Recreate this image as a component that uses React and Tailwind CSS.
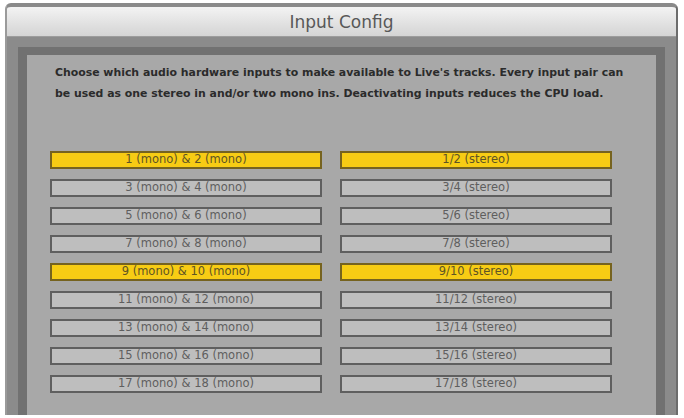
import React from 'react';

const rows = [
  { mono: '1 (mono) & 2 (mono)', stereo: '1/2 (stereo)', on: true },
  { mono: '3 (mono) & 4 (mono)', stereo: '3/4 (stereo)' },
  { mono: '5 (mono) & 6 (mono)', stereo: '5/6 (stereo)' },
  { mono: '7 (mono) & 8 (mono)', stereo: '7/8 (stereo)' },
  { mono: '9 (mono) & 10 (mono)', stereo: '9/10 (stereo)', on: true },
  { mono: '11 (mono) & 12 (mono)', stereo: '11/12 (stereo)' },
  { mono: '13 (mono) & 14 (mono)', stereo: '13/14 (stereo)' },
  { mono: '15 (mono) & 16 (mono)', stereo: '15/16 (stereo)' },
  { mono: '17 (mono) & 18 (mono)', stereo: '17/18 (stereo)' },
];

const Toggle = ({ label, on }) => (
  <button
    type="button"
    className={`h-[18px] w-[272px] border-2 flex items-center justify-center text-[11.5px] leading-none ${
      on
        ? 'bg-[#f7cc14] border-[#76631f] text-[#5e5424]'
        : 'bg-[#bebebe] border-[#5f5f5f] text-[#5e5e5e]'
    }`}
  >
    {label}
  </button>
);

const App = () => {
  return (
    <div className="w-[684px] h-[418px] bg-white overflow-hidden pt-[3px] pl-[5px] font-['DejaVu_Sans',sans-serif]">
      <div className="w-[673px] h-[412px] border-x-2 border-t-4 border-l-[#9a9a9a] border-r-[#6c6c6c] border-t-[#8a8a8a] rounded-t-[6px] bg-[#8b8b8b] flex flex-col overflow-hidden">
        {/* Title bar */}
        <div className="h-[30px] shrink-0 bg-gradient-to-b from-[#f3f3f3] to-[#d4d4d4] border-b border-[#9c9c9c] flex items-center justify-center">
          <span className="text-[17px] text-[#585858] pt-[2px]">Input Config</span>
        </div>

        {/* Body */}
        <div className="flex-1 pl-[11px] pr-[11px] pt-[10px]">
          <div className="h-full border-t-[8px] border-x-[9px] border-[#717171] bg-[#a8a8a8]">
            <p className="pl-[28px] pt-[7px] text-[10.9px] font-bold leading-[21px] text-[#2b2b2b]">
              Choose which audio hardware inputs to make available to Live's tracks. Every input pair can
              <br />
              be used as one stereo in and/or two mono ins.  Deactivating inputs reduces the CPU load.
            </p>

            <div className="mt-[47px] pl-[23px] flex flex-col gap-[10px]">
              {rows.map(r => (
                <div key={r.mono} className="flex gap-[18px]">
                  <Toggle label={r.mono} on={r.on} />
                  <Toggle label={r.stereo} on={r.on} />
                </div>
              ))}
            </div>
          </div>
        </div>
      </div>
    </div>
  );
};

export default App;
